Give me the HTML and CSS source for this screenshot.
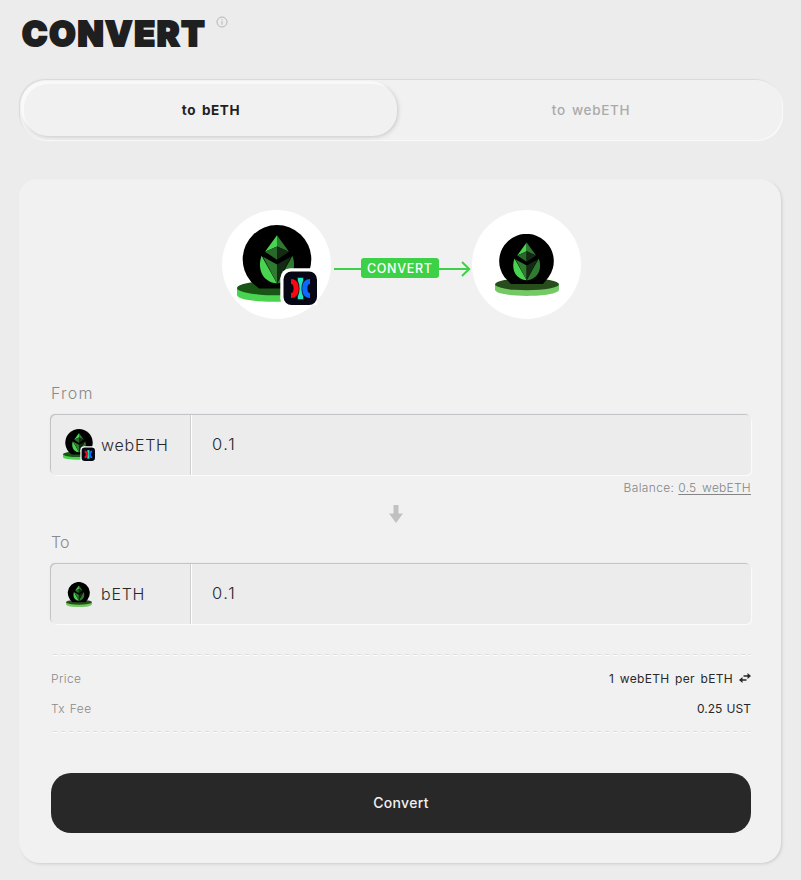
FILE: index.html
```html
<!DOCTYPE html>
<html lang="en">
<head>
<meta charset="utf-8">
<title>Convert</title>
<link rel="stylesheet" href="styles.css">
</head>
<body>
<svg class="defs" width="0" height="0" aria-hidden="true">
  <symbol id="gem" viewBox="-18 0 36 49" overflow="visible">
    <path fill="#4ad350" d="M0 0 -12 16.5 0 11.2z"/>
    <path fill="#2f7a31" d="M0 0 12 16.5 0 11.2z"/>
    <path fill="#28682b" d="M0 11.2-12 16.5 0 24.5z"/>
    <path fill="#142a14" d="M0 11.2 12 16.5 0 24.5z"/>
    <path fill="#4ad350" d="M-15.4 20.5C-20 33-15 47 0 48.2z"/>
    <path fill="#2f7a31" d="M15.4 20.5C20 33 15 47 0 48.2z"/>
    <path fill="#2f7a31" d="M-14 21.5 0 29.2v19z"/>
    <path fill="#142a14" d="M14 21.5 0 29.2v19z"/>
  </symbol>
  <symbol id="webeth" viewBox="0 0 80 80">
    <path fill="#4ad350" d="M0 63v7c0 9 74 9 74 0v-7z"/>
    <ellipse cx="37" cy="63" rx="37" ry="7.2" fill="#195615"/>
    <path d="M22 63.5 14 56.7A34.3 34.3 0 1 1 66 56.7L58 63.5z"/>
    <use href="#gem" x="22" y="10.2" width="36" height="49"/>
    <rect x="43.3" y="43.3" width="40" height="40" rx="10" fill="#fff"/>
    <rect x="46.5" y="46.5" width="33.5" height="33.5" rx="8" fill="#060614"/>
    <path fill="#fb0712" d="M54 54c5.500 0 8 4.500 8 9.500s-2.500 9.500-8 9.500v-5c2 0 2.600-2 2.600-4.500s-.6-4.500-2.600-4.500z"/>
    <path fill="#0b69ff" d="M73 54c-5.500 0-8 4.500-8 9.500s2.500 9.500 8 9.500v-5c-2 0-2.600-2-2.600-4.500s.6-4.500 2.600-4.500z"/>
    <path fill="#23e5bd" stroke="#060614" stroke-width=".5" d="M60.500 52.500h6v3q-3.500 8 0 16v3h-6v-3q3.500-8 0-16z"/>
  </symbol>
  <symbol id="beth" viewBox="0 0 64 62">
    <path fill="#74c964" d="M0 50.500v5c0 8.500 64 8.500 64 0v-5z"/>
    <ellipse cx="32" cy="50.300" rx="32" ry="6" fill="#284d1c"/>
    <path d="M16 50 9.500 43.300A27.300 27.300 0 1 1 53.500 43.300L48 50z"/>
    <use href="#gem" x="17.500" y="8.500" width="28.300" height="38.500"/>
  </symbol>
</svg>
<main class="page">
  <header class="head">
    <h1 class="title">CONVERT</h1>
    <svg class="info" viewBox="0 0 12 12" fill="none" stroke="#b7b7b7"><circle cx="6" cy="6" r="5"/><path d="M6 5.200v3.500M6 3v1.100"/></svg>
  </header>
  <nav class="tabs">
    <a class="tab active"><span class="tab-on">to bETH</span></a>
    <a class="tab"><span class="tab-off">to webETH</span></a>
  </nav>
  <section class="card">
    <div class="flow">
      <div class="coin"><svg class="coin-web"><use href="#webeth"/></svg></div>
      <div class="link">
        <svg class="arrow" viewBox="0 0 137 16" fill="none" stroke="#3dd147" stroke-width="2"><path d="M0 8h135"/><path d="M128 1l7.200 7-7.200 7"/></svg>
        <span class="pill"><span class="pill-text">CONVERT</span></span>
      </div>
      <div class="coin"><svg class="coin-b"><use href="#beth"/></svg></div>
    </div>
    <div class="label"><span class="from">From</span></div>
    <div class="field">
      <div class="token"><svg class="icon-web"><use href="#webeth"/></svg><span class="name-web">webETH</span></div>
      <div class="amount"><span class="value">0.1</span></div>
    </div>
    <div class="balance"><span class="bal">Balance:</span><u class="bal-link">0.5 webETH</u></div>
    <svg class="down" viewBox="0 0 14 18" fill="#c1c1c1"><path d="M4.500 0h5v8.500H14L7 18 0 8.500h4.500z"/></svg>
    <div class="label label-to"><span class="to">To</span></div>
    <div class="field">
      <div class="token"><svg class="icon-b"><use href="#beth"/></svg><span class="name-b">bETH</span></div>
      <div class="amount"><span class="value">0.1</span></div>
    </div>
    <div class="fees">
      <svg class="rule" viewBox="0 0 700 2"><path d="M2 .5h698" stroke="#dcdcdc" stroke-dasharray="4 4"/><path d="M2 1.500h698" stroke="#fff" stroke-dasharray="4 4"/></svg>
      <div class="row"><span class="key price">Price</span><span class="rate"><span class="rate-text">1 webETH per bETH</span>
        <svg class="swap" viewBox="0 0 12 10" fill="#282828"><path d="M8.500 0 12 3 8.500 6V3.700H4.500V2.300h4zM3.500 4 0 7l3.500 3V7.700h4V6.300h-4z"/></svg></span></div>
      <div class="row"><span class="key tx">Tx Fee</span><span class="fee-text">0.25 UST</span></div>
      <svg class="rule" viewBox="0 0 700 2"><path d="M2 .5h698" stroke="#dcdcdc" stroke-dasharray="4 4"/><path d="M2 1.500h698" stroke="#fff" stroke-dasharray="4 4"/></svg>
    </div>
    <button class="submit"><span class="submit-text">Convert</span></button>
  </section>
</main>
</body>
</html>
```
FILE: styles.css
```css
* { box-sizing: border-box; }
body { margin: 0; background: #ececec; color: #282828; font-family: Inter, "Liberation Sans", sans-serif; }
svg { display: block; flex: none; }
.defs { position: absolute; }
.page { height: 880px; padding: 13px 20px 0; }
.head { display: flex; height: 67px; padding-left: 2px; }
.title { margin: 0; font-size: 34px; line-height: 41px; font-weight: 900; letter-spacing: 1.8px; color: #1f1f1f; width: 194px; -webkit-text-stroke: 2px #1f1f1f; white-space: nowrap; }
.info { width: 12px; height: 12px; margin-top: 3px; }
.tabs { display: flex; width: 762px; height: 60px; padding: 4px; border-radius: 26px; background: #f1f1f1; box-shadow: -1px -1px 1px #d9d9d9, 1px 1px 1px #fbfbfb; }
.tab { flex: 1; display: flex; align-items: center; justify-content: center; height: 52px; padding-left: 7px; font-size: 13.5px; font-weight: 500; color: #aaa; border-radius: 24px; white-space: nowrap; }
.active { flex: none; width: 373px; padding-left: 1px; color: #1f1f1f; font-weight: 700; background: #f1f1f1; box-shadow: -3px -3px 1px #f9f9f9, 1px 1px 4px #c8c8c8; }
.tab-on { letter-spacing: 0.6px; word-spacing: 2px; }
.tab-off { letter-spacing: 0.65px; word-spacing: 2px; }
.card { margin-top: 40px; width: 761px; height: 683px; padding: 30px 30px 0 31px; border-radius: 20px; background: #f1f1f1; box-shadow: 1px 1px 3px #ccc, -1px -1px 1px #f8f8f8; }
.flow { display: flex; justify-content: center; height: 110px; }
.coin { display: flex; width: 109px; height: 109px; border-radius: 50%; background: #fff; }
.coin-web { width: 80px; height: 80px; margin: 15px 0 0 15.5px; }
.coin-b { width: 64px; height: 62px; margin: 24px 0 0 23.500px; }
.link { display: grid; width: 141px; height: 21px; margin-top: 48px; align-items: center; }
.arrow { grid-area: 1 / 1; width: 137px; height: 16px; margin-left: 3px; }
.pill { grid-area: 1 / 1; z-index: 1; display: flex; align-items: center; justify-content: center; width: 78px; height: 20px; margin: -1px 0 0 30px; border-radius: 3px; background: #3dd147; color: #fff; font-size: 12.500px; font-weight: 500; }
.pill-text { letter-spacing: 0.65px; margin-right: -0.5px; }
.label { display: flex; align-items: center; height: 20px; margin-top: 63px; font-size: 16px; font-weight: 300; color: #8a8a8a; }
.from { letter-spacing: 1.2px; }
.field { display: flex; width: 700px; height: 60px; margin-top: 12px; border-radius: 5px; background: #ececec; box-shadow: -1px -1px 1px #bfbfc4, 1px 1px 1px #fbfbfb; }
.label + .field { font-weight: 300; font-size: 16px; }
.token { display: flex; align-items: center; width: 140px; padding-left: 12px; border-right: 1px solid #cfcfd2; box-shadow: 1px 0 0 #fff; white-space: nowrap; }
.icon-web { width: 32px; height: 32px; margin-right: 6px; }
.icon-b { width: 26px; height: 25px; margin: 0 9px 0 3px; }
.name-web, .name-b { letter-spacing: 0.75px; }
.amount { display: flex; align-items: center; padding: 0 0 3px 21px; }
.value { letter-spacing: 1.6px; font-size: 16.5px; }
.balance { display: flex; justify-content: flex-end; align-items: center; gap: 4px; height: 25px; font-size: 12px; font-weight: 300; color: #858585; white-space: nowrap; }
.bal { letter-spacing: 0.35px; }
.bal-link { letter-spacing: 0.25px; word-spacing: 2px; text-underline-offset: 2px; }
.down { width: 14px; height: 18px; margin: 5px 0 0 338px; }
.label-to { margin-top: 9px; }
.fees { margin-top: 30px; }
.rule { width: 700px; height: 2px; }
.row { display: flex; align-items: center; justify-content: space-between; height: 30px; font-size: 12px; white-space: nowrap; }
.rule + .row { margin-top: 7px; }
.row + .rule { margin-top: 8px; }
.key { color: #8a8a8a; font-weight: 300; letter-spacing: 0.4px; word-spacing: 1px; }
.rate { display: flex; align-items: center; gap: 6px; }
.rate-text { letter-spacing: 0.3px; word-spacing: 2px; }
.fee-text { word-spacing: 1px; }
.swap { width: 12px; height: 10px; }
.submit { display: flex; align-items: center; justify-content: center; width: 700px; height: 60px; margin-top: 40px; padding: 0 0 1px; border: 0; border-radius: 20px; background: #282828; color: #f1f1f1; font: 500 14px Inter, sans-serif; }
.submit-text { letter-spacing: 0.3px; }
```
